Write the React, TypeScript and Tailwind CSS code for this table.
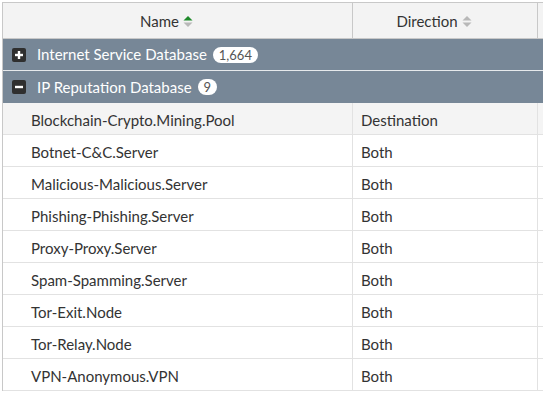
import React from "react";

const rows = [
  { name: "Blockchain-Crypto.Mining.Pool", dir: "Destination" },
  { name: "Botnet-C&C.Server", dir: "Both" },
  { name: "Malicious-Malicious.Server", dir: "Both" },
  { name: "Phishing-Phishing.Server", dir: "Both" },
  { name: "Proxy-Proxy.Server", dir: "Both" },
  { name: "Spam-Spamming.Server", dir: "Both" },
  { name: "Tor-Exit.Node", dir: "Both" },
  { name: "Tor-Relay.Node", dir: "Both" },
  { name: "VPN-Anonymous.VPN", dir: "Both" },
];

function SortIcon({ active }: { active?: boolean }) {
  return (
    <svg width="10" height="13" viewBox="0 0 10 13" className="ml-[4px]">
      <path d="M0.5 5.5 L5 1 L9.5 5.5 Z" fill={active ? "#1f8a2a" : "#b8b8b8"} />
      <path d="M0.5 7.5 L5 12 L9.5 7.5 Z" fill="#b8b8b8" />
    </svg>
  );
}

function ToggleIcon({ open }: { open?: boolean }) {
  return (
    <svg width="14" height="14" viewBox="0 0 14 14" className="shrink-0">
      <rect x="0" y="0" width="14" height="14" rx="2" fill="#2f2f2f" />
      <rect x="3" y="5.8" width="8" height="2.4" fill="#fff" />
      {!open && <rect x="5.8" y="3" width="2.4" height="8" fill="#fff" />}
    </svg>
  );
}

function GroupRow({ label, count, open, tall }: { label: string; count: string; open?: boolean; tall?: boolean }) {
  return (
    <div className={"flex items-center bg-[#778797] pl-[9px] text-white " + (tall ? "h-[32px]" : "h-[31px]")}>
      <ToggleIcon open={open} />
      <span className="ml-[11px]">{label}</span>
      <span className="ml-[6px] rounded-full bg-white px-[6px] text-[13px] leading-[16px] text-[#555]">{count}</span>
    </div>
  );
}

export default function App() {
  return (
    <div className="h-[396px] w-[543px] overflow-hidden bg-white pl-[2px] pt-[2px] font-['Lato','Liberation_Sans',sans-serif] text-[15px] text-[#333]">
      <div className="w-[600px] border-l border-t border-[#c8c8c8]">
        {/* header */}
        <div className="flex h-[36px] border-b border-[#c8c8c8] bg-[#f3f3f3]">
          <div className="flex w-[350px] items-center justify-center border-r border-[#c8c8c8] pr-[22px] pt-[1px]">
            <span>Name</span>
            <SortIcon active />
          </div>
          <div className="flex w-[185px] items-center justify-center border-r border-[#c8c8c8] pr-[22px] pt-[1px]">
            <span>Direction</span>
            <SortIcon />
          </div>
          <div className="flex-1" />
        </div>

        <GroupRow label="Internet Service Database" count="1,664" />
        <div className="h-px bg-[#e6e9ec]" />
        <GroupRow label="IP Reputation Database" count="9" open tall />

        {rows.map((r, i) => (
          <div
            key={r.name}
            className={
              "flex h-[32px] border-b border-[#e2e2e2] " + (i === 0 ? "bg-[#f4f4f4]" : "bg-white")
            }
          >
            <div className="flex w-[350px] items-center border-r border-[#e2e2e2] pl-[28px] pt-[3px]">{r.name}</div>
            <div className="flex w-[185px] items-center border-r border-[#e2e2e2] pl-[8px] pt-[3px]">{r.dir}</div>
            <div className="flex-1" />
          </div>
        ))}
      </div>
    </div>
  );
}
